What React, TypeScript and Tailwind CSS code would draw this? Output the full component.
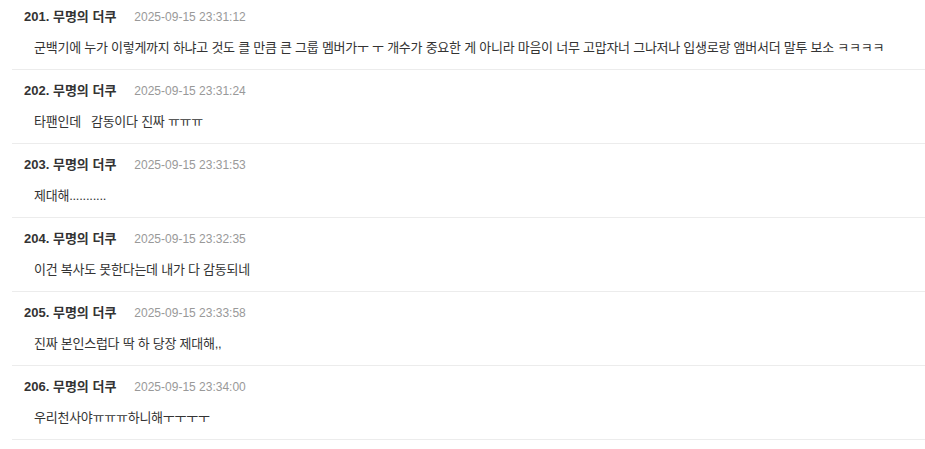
const comments = [
  {
    no: 201,
    time: "2025-09-15 23:31:12",
    text: "군백기에 누가 이렇게까지 하냐고 것도 클 만큼 큰 그룹 멤버가ㅜ ㅜ 개수가 중요한 게 아니라 마음이 너무 고맙자너 그나저나 입생로랑 앰버서더 말투 보소 ㅋㅋㅋㅋ",
  },
  { no: 202, time: "2025-09-15 23:31:24", text: "타팬인데   감동이다 진짜 ㅠㅠㅠ" },
  { no: 203, time: "2025-09-15 23:31:53", text: "제대해..........." },
  { no: 204, time: "2025-09-15 23:32:35", text: "이건 복사도 못한다는데 내가 다 감동되네" },
  { no: 205, time: "2025-09-15 23:33:58", text: "진짜 본인스럽다 딱 하 당장 제대해,," },
  { no: 206, time: "2025-09-15 23:34:00", text: "우리천사야ㅠㅠㅠ하니해ㅜㅜㅜㅜ" },
];

export default function App() {
  return (
    <div
      className="min-h-screen bg-white text-[#333]"
      style={{ fontFamily: '"Liberation Sans", "Noto Sans CJK KR", sans-serif' }}
    >
      <ul className="ml-3 -mt-[4px]">
        {comments.map((c) => (
          <li key={c.no} className="border-b border-[#ececec] pt-3 pb-[11px] pl-3">
            <div className="flex items-center h-[18px]">
              <span className="text-[13px] font-bold text-[#333]">
                {c.no}. 무명의 더쿠
              </span>
              <span className="ml-[18px] text-[12px] text-[#999]">{c.time}</span>
            </div>
            <p className="mt-3 pl-[10px] text-[13px] leading-5 tracking-[-0.25px] whitespace-pre">
              {c.text}
            </p>
          </li>
        ))}
      </ul>
    </div>
  );
}
